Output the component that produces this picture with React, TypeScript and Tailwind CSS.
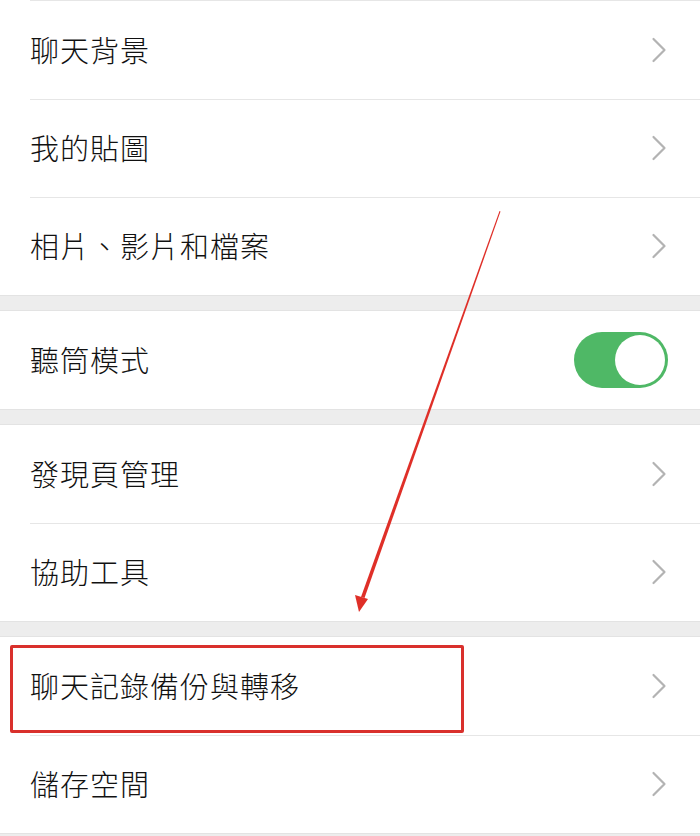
import { ChevronRight } from "lucide-react";

type Row = { label: string; toggle?: boolean; highlight?: boolean };

const groups: Row[][] = [
  [{ label: "聊天背景" }, { label: "我的貼圖" }, { label: "相片、影片和檔案" }],
  [{ label: "聽筒模式", toggle: true }],
  [{ label: "發現頁管理" }, { label: "協助工具" }],
  [{ label: "聊天記錄備份與轉移", highlight: true }, { label: "儲存空間" }],
];

const Toggle = () => (
  <div className="w-[94px] h-[56px] rounded-full bg-[#4fb866] flex items-center justify-end p-[3px]">
    <div className="w-[50px] h-[50px] rounded-full bg-white" />
  </div>
);

const SettingRow = ({ row, first }: { row: Row; first: boolean }) => (
  <div className="relative h-[98px] flex items-center pl-[30px] pr-[32px]">
    {!first && <div className="absolute top-0 left-[30px] right-0 h-px bg-[#e6e6e6]" />}
    <span className="flex-1 text-[29px] font-light text-[#111] tracking-[1px]">{row.label}</span>
    {row.toggle ? (
      <Toggle />
    ) : (
      <ChevronRight size={44} strokeWidth={1.2} className="text-[#b3b3b3] -mr-[13px]" />
    )}
    {row.highlight && (
      <div className="absolute left-[10px] top-[8px] w-[454px] h-[88px] border-[3px] border-[#d9302c] rounded-[2px]" />
    )}
  </div>
);

export default function App() {
  return (
    <div
      className="relative w-[700px] h-[836px] overflow-hidden bg-white"
      style={{ fontFamily: '"Noto Sans CJK TC", "Noto Sans", sans-serif' }}
    >
      <div className="h-px ml-[30px] bg-[#e6e6e6]" />
      {groups.map((g, gi) => (
        <div key={gi}>
          {gi > 0 && <div className="h-[16px] bg-[#ededed] border-y border-[#e3e3e3]" />}
          {g.map((row, ri) => (
            <SettingRow key={row.label} row={row} first={ri === 0} />
          ))}
        </div>
      ))}
      <div className="h-[16px] bg-[#ededed] border-t border-[#e3e3e3]" />

      {/* annotation arrow */}
      <svg className="absolute left-0 top-0 pointer-events-none" width="700" height="836">
        <polygon points="499.5,211 500.5,211.5 364.5,598 361,597" fill="#df2f28" />
        <polygon points="359,612 355,595 368,599" fill="#df2f28" />
      </svg>
    </div>
  );
}
